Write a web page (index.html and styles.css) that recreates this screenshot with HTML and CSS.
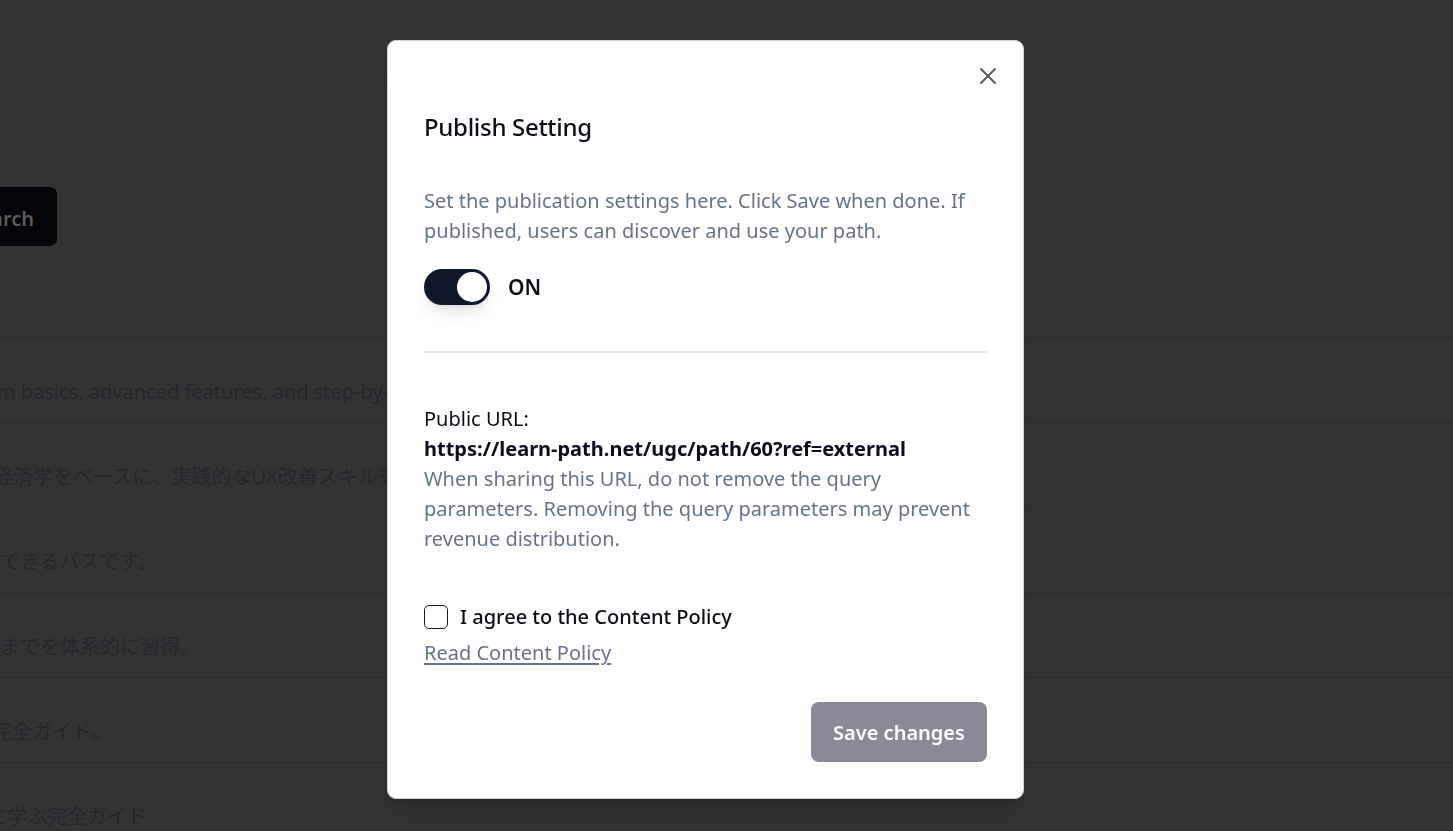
FILE: index.html
```html
<!DOCTYPE html>
<html lang="en">
<head>
<meta charset="utf-8">
<title>Publish Setting</title>
<link rel="stylesheet" href="styles.css">
</head>
<body>
<div class="page">
  <div class="toolbar">
    <button class="search-btn">Search</button>
  </div>
  <div class="list">
    <div class="row"><div class="row-clip"><p class="row-text r1">from basics, advanced features, and step-by-step examples</p></div></div>
    <div class="row"><div class="row-clip"><p class="row-text r2">行動経済学をベースに、実践的なUX改善スキルを身につける</p></div></div>
    <div class="row"><div class="row-clip"><p class="row-text r3">活用できるパスです。</p></div></div>
    <div class="row"><div class="row-clip"><p class="row-text r4">応用までを体系的に習得。</p></div></div>
    <div class="row"><div class="row-clip"><p class="row-text r5">の完全ガイド。</p></div></div>
    <div class="row"><div class="row-clip"><p class="row-text r6">的に学ぶ完全ガイド</p></div></div>
  </div>
</div>

<div class="overlay">
  <div class="modal" role="dialog">
    <button class="close" aria-label="Close">
      <svg width="28" height="28" viewBox="0 0 24 24" fill="none" stroke="currentColor" stroke-width="1.6" stroke-linecap="round"><path d="M18 6 6 18"/><path d="m6 6 12 12"/></svg>
    </button>
    <h2 class="title">Publish Setting</h2>
    <p class="desc">Set the publication settings here. Click Save when done. If published, users can discover and use your path.</p>
    <div class="switch-row">
      <span class="switch"><span class="knob"></span></span>
      <span class="switch-label">ON</span>
    </div>
    <hr class="divider">
    <div class="url-block">
      <div class="url-label">Public URL:</div>
      <div class="url">https://learn-path.net/ugc/path/60?ref=external</div>
      <p class="url-note">When sharing this URL, do not remove the query parameters. Removing the query parameters may prevent revenue distribution.</p>
    </div>
    <label class="agree">
      <span class="checkbox"></span>
      <span>I agree to the Content Policy</span>
    </label>
    <a class="policy-link" href="#">Read Content Policy</a>
    <div class="footer">
      <button class="save">Save changes</button>
    </div>
  </div>
</div>
</body>
</html>
```
FILE: styles.css
```css
* { box-sizing: border-box; }
html, body { margin: 0; padding: 0; }
body {
  background: #333333;
  font-family: "Noto Sans", "Noto Sans CJK JP", sans-serif;
  width: 1453px;
  height: 831px;
  overflow: hidden;
}
.page {
  height: 831px;
  overflow: hidden;
}
.toolbar {
  padding-top: 187px;
  height: 337px;
}
.search-btn {
  display: block;
  margin-left: -60px;
  width: 117px;
  height: 59px;
  border: none;
  border-radius: 7px;
  background: #030407;
  color: #5a5a5c;
  font-family: inherit;
  font-size: 20px;
  font-weight: 600;
  text-align: right;
  padding: 4px 23px 0 0;
}
.list { width: 1453px; }
.row {
  height: 85px;
  border-top: 1px solid #2d2d2d;
}
.row-clip {
  width: 386px;
  height: 84px;
  overflow: hidden;
  white-space: nowrap;
}
.row-text {
  margin: 39px 0 0 0;
  font-size: 20px;
  line-height: 30px;
  color: #24272e;
}
.r1 { margin-left: -30px; }
.r2 { margin-left: -47px; }
.r3 { margin-left: -40px; }
.r4 { margin-left: -40px; }
.r5 { margin-left: -28px; }
.r6 { margin-left: -33px; }

.overlay {
  position: fixed;
  inset: 0;
}
.modal {
  position: relative;
  margin: 40px 0 0 387px;
  width: 637px;
  height: 759px;
  background: #ffffff;
  border: 1px solid #cfd5de;
  border-radius: 9px;
  padding: 35px 36px 36px 36px;
  display: flex;
  flex-direction: column;
  box-shadow: 0 20px 25px -5px rgba(0,0,0,0.15), 0 8px 10px -6px rgba(0,0,0,0.15);
  color: #0f172a;
}
.close {
  position: absolute;
  top: 21px;
  right: 21px;
  width: 28px;
  height: 28px;
  padding: 0;
  border: none;
  background: none;
  color: #55585e;
  display: flex;
  align-items: center;
  justify-content: center;
}
.title {
  margin: 35px 0 0 0;
  font-size: 24px;
  line-height: 32px;
  font-weight: 500;
  color: #0b0f19;
  letter-spacing: -0.3px;
}
.desc {
  margin: 43px 0 0 0;
  font-size: 20px;
  line-height: 30px;
  color: #64748b;
}
.switch-row {
  margin-top: 23px;
  display: flex;
  align-items: center;
  gap: 18px;
  height: 35px;
}
.switch {
  width: 66px;
  height: 36px;
  border-radius: 18px;
  background: #0f172a;
  padding: 3px;
  display: flex;
  justify-content: flex-end;
  box-shadow: 0 10px 15px -3px rgba(0,0,0,0.1), 0 4px 6px -4px rgba(0,0,0,0.1);
}
.knob {
  width: 30px;
  height: 30px;
  border-radius: 50%;
  background: #ffffff;
}
.switch-label {
  font-size: 21px;
  font-weight: 600;
  color: #0b0f19;
}
.divider {
  margin: 47px 0 0 0;
  border: none;
  height: 2px;
  background: #e2e8f0;
}
.url-block {
  margin-top: 51px;
  font-size: 20px;
  line-height: 30px;
}
.url-label { color: #0b0f19; }
.url { font-weight: 700; color: #0b0f19; }
.url-note { margin: 0; color: #64748b; }
.agree {
  margin-top: 48px;
  display: flex;
  align-items: center;
  gap: 12px;
  font-size: 20px;
  line-height: 30px;
  font-weight: 500;
  color: #0b0f19;
}
.checkbox {
  width: 24px;
  height: 24px;
  border: 1.5px solid #0f172a;
  border-radius: 5px;
}
.policy-link {
  margin-top: 6px;
  align-self: flex-start;
  font-size: 20px;
  line-height: 30px;
  color: #64748b;
  text-decoration: underline;
  text-underline-offset: 3px;
}
.footer {
  margin-top: auto;
  display: flex;
  justify-content: flex-end;
}
.save {
  width: 176px;
  height: 60px;
  border: none;
  border-radius: 8px;
  background: #878b94;
  color: #ffffff;
  font-family: inherit;
  font-size: 20px;
  font-weight: 600;
}
```
